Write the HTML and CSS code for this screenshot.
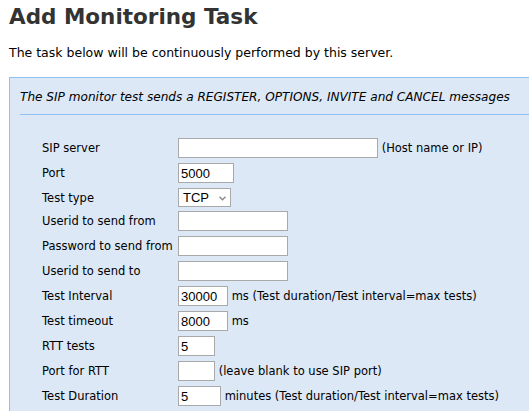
FILE: index.html
```html
<!DOCTYPE html>
<html lang="en">
<head>
    <meta charset="UTF-8"/>
    <title>Add Monitoring Task</title>
    <link rel="stylesheet" href="styles.css">
</head>
<body>
    <h1>Add Monitoring Task</h1>
    <p class="intro">The task below will be continuously performed by this server.</p>

    <div class="panel">
        <p class="caption">The SIP monitor test sends a REGISTER, OPTIONS, INVITE and CANCEL messages</p>
        <table class="form">
            <tr>
                <td class="label">SIP server</td>
                <td><input type="text" class="w200"> (Host name or IP)</td>
            </tr>
            <tr>
                <td class="label">Port</td>
                <td><input type="text" class="w56" value="5000"></td>
            </tr>
            <tr class="compact">
                <td class="label">Test type</td>
                <td>
                    <span class="select-wrap">
                        <select>
                            <option>TCP</option>
                            <option>UDP</option>
                        </select>
                        <svg class="chevron" width="7" height="5" viewBox="0 0 7 5">
                            <path d="M0.5 0.8 L3.5 3.8 L6.5 0.8" fill="none" stroke="#8a8a8a" stroke-width="1.4"/>
                        </svg>
                    </span>
                </td>
            </tr>
            <tr>
                <td class="label">Userid to send from</td>
                <td><input type="text" class="w110"></td>
            </tr>
            <tr>
                <td class="label">Password to send from</td>
                <td><input type="password" class="w110"></td>
            </tr>
            <tr>
                <td class="label">Userid to send to</td>
                <td><input type="text" class="w110"></td>
            </tr>
            <tr>
                <td class="label">Test Interval</td>
                <td><input type="text" class="w50" value="30000"> ms (Test duration/Test interval=max tests)</td>
            </tr>
            <tr>
                <td class="label">Test timeout</td>
                <td><input type="text" class="w50" value="8000"> ms</td>
            </tr>
            <tr>
                <td class="label">RTT tests</td>
                <td><input type="text" class="w37" value="5"></td>
            </tr>
            <tr>
                <td class="label">Port for RTT</td>
                <td><input type="text" class="w37"> (leave blank to use SIP port)</td>
            </tr>
            <tr>
                <td class="label">Test Duration</td>
                <td><input type="text" class="w43" value="5"> minutes (Test duration/Test interval=max tests)</td>
            </tr>
        </table>
    </div>
</body>
</html>
```

FILE: styles.css
```css
html, body {
    overflow-x: hidden;
}
body {
    font-family: "DejaVu Sans", Verdana, sans-serif;
    font-size: 12px;
    color: #000;
    background: #fff;
    margin: 0;
    padding: 0 9px;
}
h1 {
    font-size: 21.5px;
    color: #333;
    margin: 4px 0 0;
    line-height: 26px;
}
.intro {
    font-size: 12.5px;
    margin: 15px 0 0;
    line-height: 16px;
}
.panel {
    width: 560px;
    margin-top: 16px;
    background: #dce8f6;
    border: 1px solid #8ec0f0;
    padding: 0 10px;
}
.caption {
    font-style: italic;
    font-size: 12.1px;
    margin: 0;
    padding: 11px 0 9px;
    line-height: 16px;
    border-bottom: 1px solid #8ec0f0;
}
.form {
    border-collapse: collapse;
    margin: 23px 0 0 22px;
    font-size: 11.5px;
}
.form td {
    padding: 0 0 5px;
    height: 20px;
    white-space: nowrap;
    vertical-align: middle;
}
.form td.label {
    width: 136px;
}
.form tr.compact td {
    height: 19px;
    padding-bottom: 4px;
}
input, select {
    font-family: "Liberation Sans", Arial, sans-serif;
    font-size: 13px;
    color: #000;
    height: 20px;
    box-sizing: border-box;
    border: 1px solid #a9a9a9;
    background: #fff;
    padding: 1px 2px;
    margin: 0;
    vertical-align: middle;
}
.select-wrap {
    position: relative;
    display: inline-block;
    vertical-align: middle;
}
select {
    appearance: none;
    -webkit-appearance: none;
    display: block;
    width: 53px;
    height: 19px;
    padding: 0 4px;
    border-radius: 0;
}
.chevron {
    position: absolute;
    left: 41px;
    top: 8px;
    pointer-events: none;
}
.w200 { width: 200px; }
.w110 { width: 110px; }
.w56 { width: 56px; }
.w50 { width: 50px; }
.w43 { width: 43px; }
.w37 { width: 37px; }
```
